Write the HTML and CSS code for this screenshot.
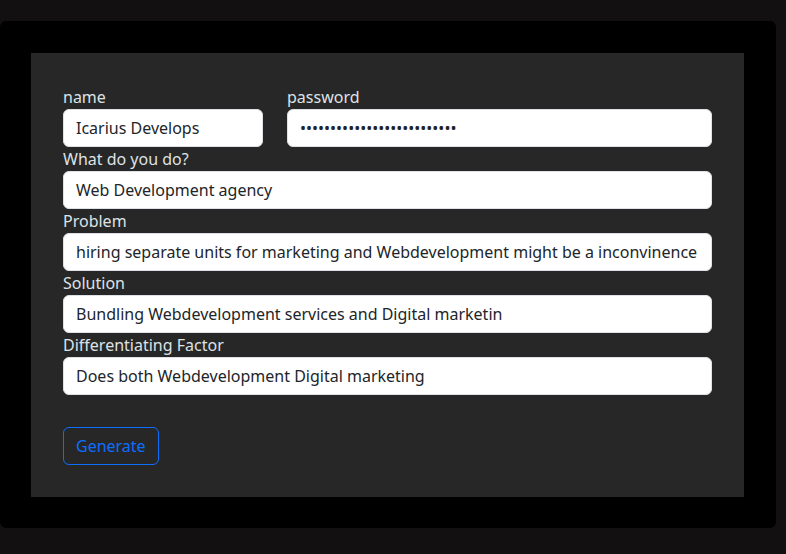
FILE: index.html
```html
<!DOCTYPE html>
<html lang="en">
<head>
<meta charset="utf-8">
<title>Generator</title>
<link rel="stylesheet" href="styles.css">
</head>
<body>
<div class="frame">
  <form class="panel">
    <div class="row-two">
      <div class="field">
        <label class="label" for="name">name</label>
        <input class="control" id="name" type="text" value="Icarius Develops">
      </div>
      <div class="field">
        <label class="label" for="pw">password</label>
        <input class="control" id="pw" type="password" value="abcdefghijklmnopqrstuvwxyz">
      </div>
    </div>
    <div class="field">
      <label class="label" for="what">What do you do?</label>
      <input class="control" id="what" type="text" value="Web Development agency">
    </div>
    <div class="field">
      <label class="label" for="problem">Problem</label>
      <input class="control" id="problem" type="text" value="hiring separate units for marketing and Webdevelopment might be a inconvinence">
    </div>
    <div class="field">
      <label class="label" for="solution">Solution</label>
      <input class="control" id="solution" type="text" value="Bundling Webdevelopment services and Digital marketin">
    </div>
    <div class="field">
      <label class="label" for="diff">Differentiating Factor</label>
      <input class="control" id="diff" type="text" value="Does both Webdevelopment Digital marketing">
    </div>
    <div class="actions">
      <button class="btn-outline" type="button">Generate</button>
    </div>
  </form>
</div>
</body>
</html>
```

FILE: styles.css
```css
html, body {
  margin: 0;
  padding: 0;
  background: #121010;
  height: 100%;
}
body {
  font-family: "Noto Sans", "Open Sans", sans-serif;
  font-size: 16px;
  line-height: 24px;
  color: #dee2e6;
  padding-top: 21px;
  box-sizing: border-box;
}
.frame {
  width: 776px;
  box-sizing: border-box;
  background: #000;
  border-radius: 6px;
  padding: 32px 32px 31px 31px;
}
.panel {
  background: #272727;
  padding: 32px;
  display: flex;
  flex-direction: column;
}
.row-two {
  display: grid;
  grid-template-columns: 200px 1fr;
  column-gap: 24px;
}
.field {
  display: flex;
  flex-direction: column;
}
.label {
  display: block;
  height: 24px;
  line-height: 24px;
  color: #dee2e6;
}
.control {
  font-family: inherit;
  font-size: 16px;
  line-height: 24px;
  height: 38px;
  box-sizing: border-box;
  padding: 6px 12px;
  border: 1px solid #dee2e6;
  border-radius: 6px;
  background: #fff;
  color: #212529;
  width: 100%;
  margin: 0;
  outline: none;
}
.actions {
  margin-top: 32px;
  display: flex;
}
.btn-outline {
  font-family: inherit;
  font-size: 16px;
  line-height: 24px;
  padding: 6px 12px;
  border: 1px solid #0d6efd;
  border-radius: 6px;
  background: transparent;
  color: #0d6efd;
  cursor: pointer;
  margin: 0;
}
```
